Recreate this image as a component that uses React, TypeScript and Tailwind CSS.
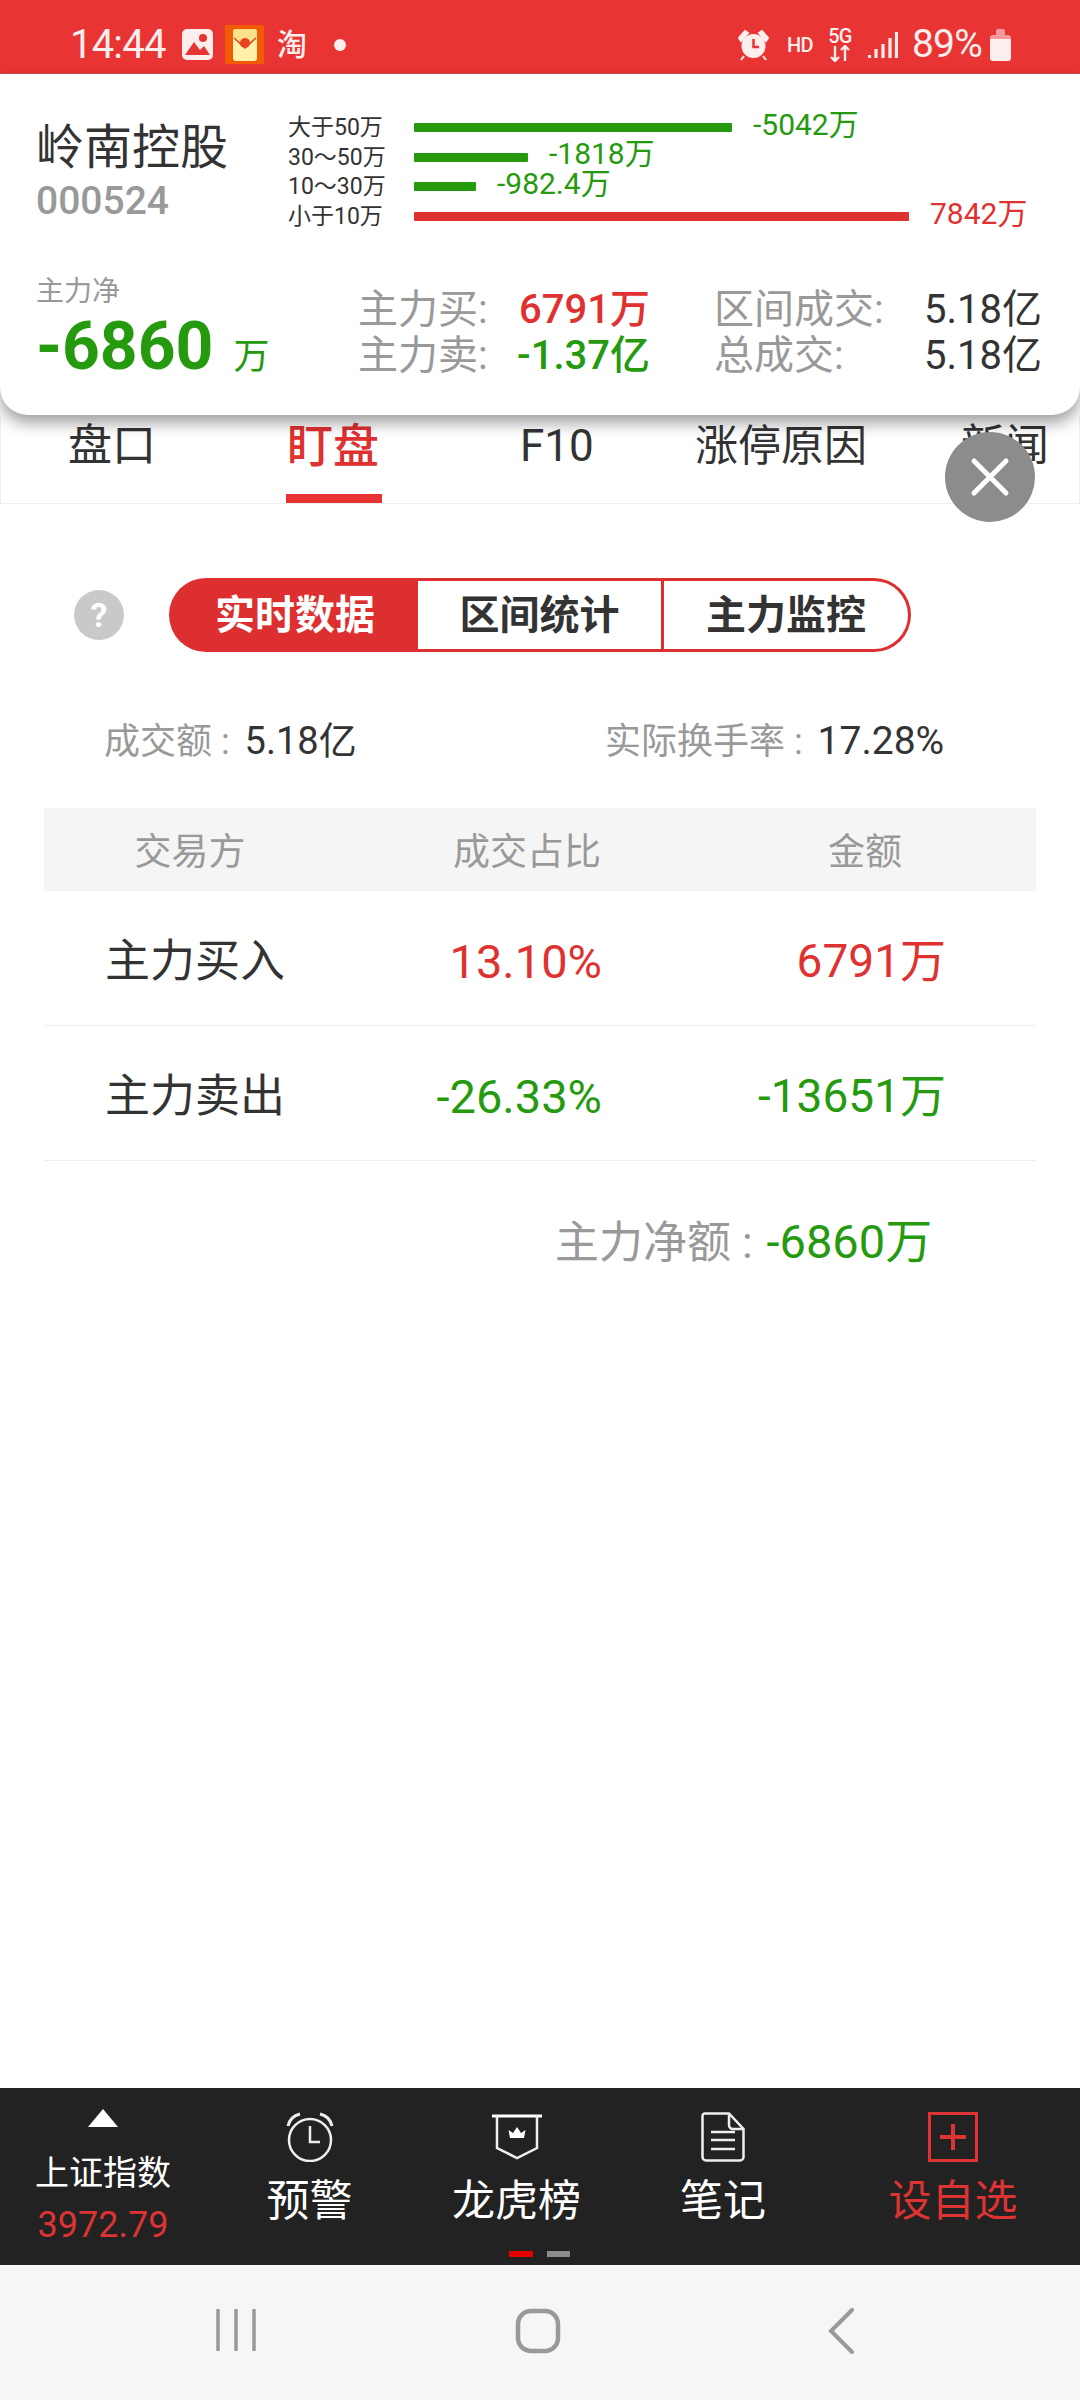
const green = "text-[#259a0f]";

const flows = [
  { label: "大于50万", w: 318, value: "-5042万", color: "bg-[#259a0f]", text: "text-[#259a0f]" },
  { label: "30～50万", w: 114, value: "-1818万", color: "bg-[#259a0f]", text: "text-[#259a0f]" },
  { label: "10～30万", w: 62, value: "-982.4万", color: "bg-[#259a0f]", text: "text-[#259a0f]" },
  { label: "小于10万", w: 495, value: "7842万", color: "bg-[#e03131]", text: "text-[#e03131]" },
];

function StatusBar() {
  return (
    <div className="h-[74px] bg-[#e93434] flex items-center pt-[16px] pl-[70px] pr-[69px] text-[#fdeeee] border-b border-[#c94a4a]">
      <span className="text-[40px] leading-none tracking-[-0.8px] w-[112px]">14:44</span>
      <svg width="31" height="31" viewBox="0 0 31 31" className="shrink-0">
        <rect width="31" height="31" rx="5" fill="#fdeeee" />
        <circle cx="21" cy="9" r="4" fill="#e93434" />
        <path d="M3 26 L12 13 L18 21 L22 17 L28 26 Z" fill="#e93434" />
      </svg>
      <div className="ml-[12px] w-[39px] h-[39px] bg-[#f25a06] flex items-center justify-center shrink-0">
        <svg width="24" height="32" viewBox="0 0 24 32">
          <rect width="24" height="32" rx="3" fill="#fff1a8" />
          <path d="M0 9 L12 19 L24 9 V3 A3 3 0 0 0 21 0 H3 A3 3 0 0 0 0 3 Z" fill="#fbe08a" />
          <path d="M1 9 L12 19 L23 9" fill="none" stroke="#d9481c" strokeWidth="1.5" />
          <circle cx="12" cy="14" r="5" fill="#e8431c" />
        </svg>
      </div>
      <span className="ml-[13px] text-[30px] leading-none font-medium">淘</span>
      <span className="ml-[27px] w-[12px] h-[12px] rounded-full bg-[#fdeeee]" />
      <div className="flex-1" />
      <svg width="31" height="32" viewBox="0 0 31 32" className="shrink-0">
        <circle cx="15.5" cy="17" r="12" fill="#fdeeee" />
        <path d="M1 9 L7 2 L10 4 L3 12 Z M30 9 L24 2 L21 4 L28 12 Z M6 27 L3 31 M25 27 L28 31" fill="#fdeeee" stroke="#fdeeee" strokeWidth="2" />
        <path d="M15.5 10 V18 H21" fill="none" stroke="#e93434" strokeWidth="2.5" />
      </svg>
      <span className="ml-[18px] text-[20px] font-medium tracking-[-0.6px] leading-none w-[25px] whitespace-nowrap">HD</span>
      <div className="ml-[16px] w-[24px] flex flex-col items-center leading-none shrink-0 -mt-[1px]">
        <span className="text-[20px] font-medium tracking-[-0.8px] leading-[18px]">5G</span>
        <svg width="24" height="17" viewBox="0 0 24 17">
          <path d="M7 1 V16 M3 12 L7 16 L11 12 M17 16 V1 M13 5 L17 1 L21 5" fill="none" stroke="#fdeeee" strokeWidth="2.4" />
        </svg>
      </div>
      <svg width="30" height="28" viewBox="0 0 30 28" className="ml-[16px] shrink-0">
        <path d="M1.5 24 V27 M8 18 V27 M15 13 V27 M22 7 V27 M28.5 1 V27" stroke="#fdeeee" strokeWidth="3.2" />
      </svg>
      <span className="ml-[14px] text-[39px] leading-none tracking-[-0.8px] w-[78px] whitespace-nowrap">89%</span>
      <svg width="21" height="32" viewBox="0 0 21 32" className="shrink-0">
        <path d="M6 6 V2 A2 2 0 0 1 8 0 H13 A2 2 0 0 1 15 2 V6 H18 A3 3 0 0 1 21 9 V10 H0 V9 A3 3 0 0 1 3 6 Z" fill="#f59a9a" />
        <path d="M0 10 H21 V29 A3 3 0 0 1 18 32 H3 A3 3 0 0 1 0 29 Z" fill="#fdeeee" />
      </svg>
    </div>
  );
}

function StockCard() {
  return (
    <div className="relative z-10 h-[341px] bg-white rounded-b-[28px] shadow-[0_8px_16px_rgba(0,0,0,0.38)] pl-[36px] pr-[38px]">
      <div className="flex pt-[39px] h-[204px]">
        <div className="w-[252px] shrink-0 pt-[7px]">
          <div className="text-[48px] leading-[56px] text-[#333]">岭南控股</div>
          <div className="mt-[3px] text-[39px] leading-[44px] font-medium text-[#999]">000524</div>
        </div>
        <div className="flex flex-col">
          {flows.map((f) => (
            <div key={f.label} className="h-[29.6px] flex items-center">
              <span className="w-[126px] text-[23px] leading-none text-[#333] whitespace-nowrap">{f.label}</span>
              <span className={`h-[9px] rounded-[1px] ${f.color}`} style={{ width: f.w }} />
              <span className={`ml-[21px] text-[30px] leading-none -mt-[6px] whitespace-nowrap ${f.text}`}>{f.value}</span>
            </div>
          ))}
        </div>
      </div>
      <div className="flex">
        <div className="w-[322px] shrink-0">
          <div className="text-[28px] leading-[30px] -mt-[1px] text-[#999]">主力净</div>
          <div className={`flex items-baseline mt-[3px] ${green}`}>
            <span className="text-[66px] leading-[74px] font-bold">-6860</span>
            <span className="ml-[20px] text-[36px] leading-none">万</span>
          </div>
        </div>
        <div className="w-[684px] grid grid-cols-[130px_162px_273px_119px] grid-rows-[46px_46px] pt-[9px] text-[40px] leading-[46px] text-[#999] whitespace-nowrap">
          <span>主力买:</span>
          <span className="text-right font-medium text-[#e03131]">6791万</span>
          <span className="pl-[64px]">区间成交:</span>
          <span className="text-[#333] text-right">5.18亿</span>
          <span>主力卖:</span>
          <span className={`text-right ${green} font-medium`}>-1.37亿</span>
          <span className="pl-[64px]">总成交:</span>
          <span className="text-[#333] text-right">5.18亿</span>
        </div>
      </div>
    </div>
  );
}

function Tabs() {
  return (
    <div className="relative h-[89px] border-x border-b border-[#eeeeee] text-[#333] text-[44px] leading-none">
      <div className="absolute left-[67px] top-[9px]">盘口</div>
      <div className="absolute left-[284px] top-[8px] w-[96px] text-center text-[46px] text-[#e03131] font-medium whitespace-nowrap">盯盘</div>
      <div className="absolute left-[285px] bottom-0 w-[96px] h-[9px] bg-[#e73232]" />
      <div className="absolute left-[519px] top-[9px]">F10</div>
      <div className="absolute left-[694px] top-[10px] text-[43px] whitespace-nowrap">涨停原因</div>
      <div className="absolute left-[960px] top-[9px] whitespace-nowrap">新闻</div>
      <div className="absolute left-[944px] top-[17px] w-[90px] h-[90px] rounded-full bg-[#8c8c8c] flex items-center justify-center z-20">
        <svg width="40" height="40" viewBox="0 0 40 40">
          <path d="M4 4 L36 36 M36 4 L4 36" stroke="#fff" strokeWidth="5" strokeLinecap="round" />
        </svg>
      </div>
    </div>
  );
}

function Segments() {
  return (
    <div className="flex items-center pl-[74px] pt-[74px]">
      <div className="w-[50px] h-[50px] rounded-full bg-[#c9c9c9] text-white text-[34px] leading-none font-bold flex items-center justify-center">?</div>
      <div className="ml-[45px] w-[742px] h-[74px] rounded-full bg-[#dd2f2f] p-[3px] flex text-[40px] leading-none font-bold text-[#333]">
        <div className="w-[246px] text-white flex items-center justify-center pt-[1px]">实时数据</div>
        <div className="w-[243px] bg-white flex items-center justify-center pt-[1px]">区间统计</div>
        <div className="flex-1 ml-[3px] bg-white rounded-r-full flex items-center justify-center pt-[1px]">主力监控</div>
      </div>
    </div>
  );
}

function Table() {
  return (
    <div className="mx-[44px] mt-[47px]">
      <div className="h-[83px] bg-[#f5f5f5] border-b border-[#eeeeee] grid grid-cols-[292px_382px_294px] items-center text-center text-[37px] leading-none pt-[6px] text-[#999]">
        <span>交易方</span>
        <span>成交占比</span>
        <span>金额</span>
      </div>
      <div className="h-[135px] border-b border-[#eeeeee] flex items-center text-[47px] leading-none pt-[6px]">
        <span className="pl-[61px] w-[300px] text-[45px] text-[#333]">主力买入</span>
        <span className="w-[258px] text-right text-[#e03131]">13.10%</span>
        <span className="w-[344px] text-right text-[46px] text-[#e03131]">6791万</span>
      </div>
      <div className="h-[135px] border-b border-[#eeeeee] flex items-center text-[47px] leading-none pt-[6px]">
        <span className="pl-[61px] w-[300px] text-[45px] text-[#333]">主力卖出</span>
        <span className={`w-[258px] text-right ${green}`}>-26.33%</span>
        <span className={`w-[344px] text-right text-[46px] ${green}`}>-13651万</span>
      </div>
    </div>
  );
}

function BottomBar() {
  const labelClass = "text-[43px] leading-[50px] mt-[14px] whitespace-nowrap";
  return (
    <div className="relative mt-auto h-[177px] bg-[#222222] flex text-white">
      <div className="w-[206px] flex flex-col items-center pt-[21px]">
        <svg width="30" height="18" viewBox="0 0 30 18"><path d="M15 0 L30 18 H0 Z" fill="#fff" /></svg>
        <span className="mt-[26px] text-[34px] leading-[40px]">上证指数</span>
        <span className="mt-[12px] text-[36px] leading-[40px] text-[#dd3333]">3972.79</span>
      </div>
      <div className="w-[207px] flex flex-col items-center pt-[24px]">
        <svg width="50" height="50" viewBox="0 0 50 50" fill="none" stroke="#eee" strokeWidth="2.5">
          <circle cx="25" cy="28" r="21" />
          <path d="M25 14 V30 H35" />
          <path d="M3 14 A16 16 0 0 1 15 2 M47 14 A16 16 0 0 0 35 2" strokeWidth="3" />
        </svg>
        <span className={labelClass}>预警</span>
      </div>
      <div className="w-[207px] flex flex-col items-center pt-[24px]">
        <svg width="50" height="50" viewBox="0 0 50 50" fill="none">
          <path d="M0 4 H50" stroke="#fff" strokeWidth="3" />
          <path d="M5 4 V36 L25 46 L45 36 V4" stroke="#eee" strokeWidth="2.5" />
          <path d="M18 26 L16.5 18 L21 21 L25 15 L29 21 L33.5 18 L32 26 Z" fill="#fff" />
        </svg>
        <span className={labelClass}>龙虎榜</span>
      </div>
      <div className="w-[206px] flex flex-col items-center pt-[24px]">
        <svg width="44" height="50" viewBox="0 0 44 50" fill="none" stroke="#eee" strokeWidth="2.5">
          <path d="M4 1.5 H28 L42.5 17 V45 A3.5 3.5 0 0 1 39 48.5 H5 A3.5 3.5 0 0 1 1.5 45 V4 A2.5 2.5 0 0 1 4 1.5 Z" />
          <path d="M28 1.5 V13 A4 4 0 0 0 32 17 H42.5" />
          <path d="M10 20 H34 M10 28 H34 M10 37 H34" />
        </svg>
        <span className={labelClass}>笔记</span>
      </div>
      <div className="flex-1 flex flex-col items-center pt-[24px] text-[#dd3333]">
        <svg width="50" height="50" viewBox="0 0 50 50" fill="none" stroke="#dd3333" strokeWidth="3">
          <rect x="1.5" y="1.5" width="47" height="47" />
          <path d="M25 12 V38 M12 25 H38" strokeWidth="4" />
        </svg>
        <span className={labelClass}>设自选</span>
      </div>
      <div className="absolute left-[509px] bottom-[8px] flex gap-[14px]">
        <span className="w-[24px] h-[6px] bg-[#e60000]" />
        <span className="w-[23px] h-[6px] bg-[#8c8c8c]" />
      </div>
    </div>
  );
}

function NavBar() {
  return (
    <div className="h-[135px] bg-[#f6f6f6] flex items-start pt-[43px]">
      <svg width="44" height="44" viewBox="0 0 44 44" className="ml-[214px]" fill="none" stroke="#999" strokeWidth="3.5">
        <path d="M4 1 V43 M22 1 V43 M40 1 V43" />
      </svg>
      <svg width="46" height="46" viewBox="0 0 46 46" className="ml-[257px]" fill="none" stroke="#999" strokeWidth="4.5">
        <rect x="3" y="3" width="40" height="40" rx="13" />
      </svg>
      <svg width="28" height="46" viewBox="0 0 28 46" className="ml-[266px]" fill="none" stroke="#999" strokeWidth="4" strokeLinecap="round">
        <path d="M25 2 L4 23 L25 44" />
      </svg>
    </div>
  );
}

export default function App() {
  return (
    <div
      className="relative w-[1080px] h-[2400px] bg-white flex flex-col overflow-hidden"
      style={{ fontFamily: 'Roboto, "Noto Sans CJK SC", sans-serif' }}
    >
      <StatusBar />
      <StockCard />
      <Tabs />
      <Segments />
      <div className="flex text-[36px] leading-none mt-[70px]">
        <div className="ml-[104px] w-[501px] whitespace-pre">
          <span className="text-[#999]">成交额 : </span>
          <span className="text-[#333] text-[38px] ml-[6px]">5.18亿</span>
        </div>
        <div className="whitespace-pre">
          <span className="text-[#999]">实际换手率 : </span>
          <span className="text-[#333] text-[39px] ml-[6px]">17.28%</span>
        </div>
      </div>
      <Table />
      <div className="mt-[56px] pl-[555px] text-[44px] leading-[50px] whitespace-pre">
        <span className="text-[#999]">主力净额 : </span>
        <span className={`${green} text-[47px] ml-[3px]`}>-6860万</span>
      </div>
      <BottomBar />
      <NavBar />
    </div>
  );
}
